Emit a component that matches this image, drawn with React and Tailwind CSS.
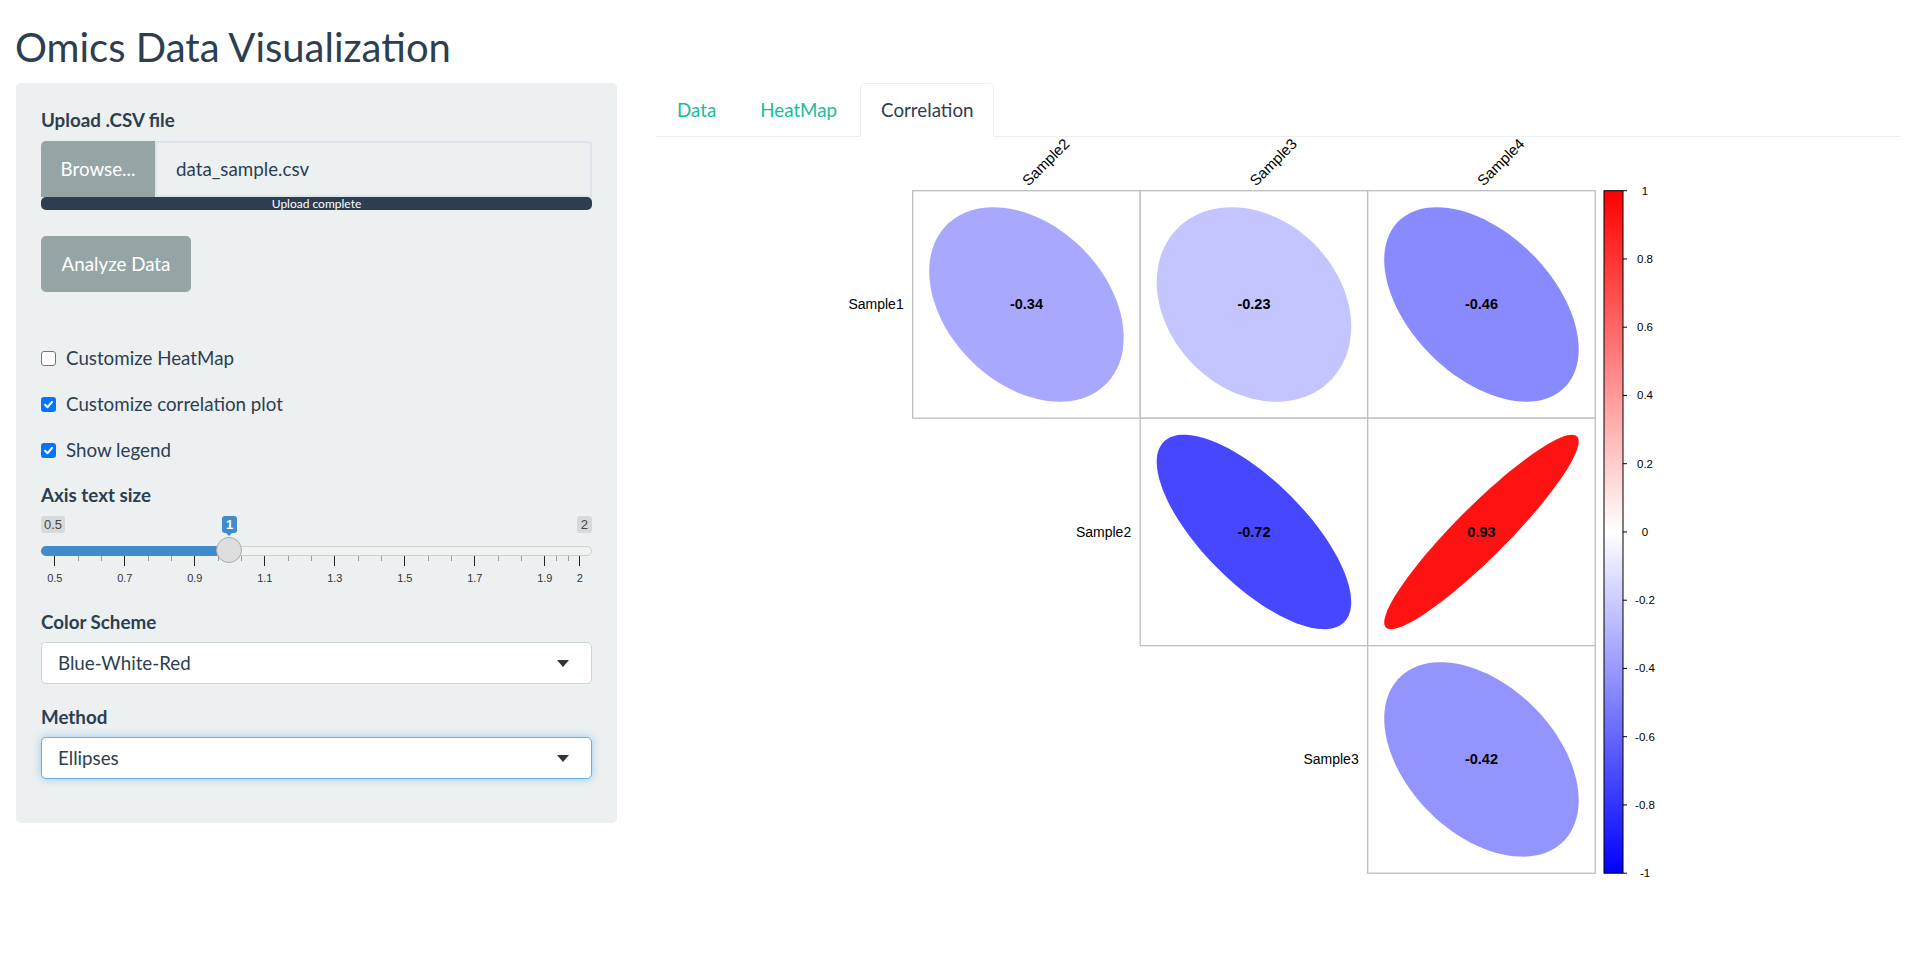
import React from 'react';

const cells = [
  { row: 0, col: 0, r: -0.34 },
  { row: 0, col: 1, r: -0.23 },
  { row: 0, col: 2, r: -0.46 },
  { row: 1, col: 1, r: -0.72 },
  { row: 1, col: 2, r: 0.93 },
  { row: 2, col: 2, r: -0.42 },
];

const colNames = ['Sample2', 'Sample3', 'Sample4'];
const rowNames = ['Sample1', 'Sample2', 'Sample3'];

// plot geometry (svg units = page px, offset from the tab content origin)
const GX = 256.7;
const GY = 53.7;
const CELL = 227.5;
const LEG_X = 948;
const LEG_W = 19;
const LEG_H = CELL * 3;

function fillFor(r) {
  if (r < 0) {
    const c = Math.round(255 * (1 + r));
    return `rgb(${c},${c},255)`;
  }
  const c = Math.round(255 * (1 - r));
  return `rgb(255,${c},${c})`;
}

function ellipsePoints(cx, cy, size, rho) {
  const a = Math.acos(rho);
  const pts = [];
  for (let i = 0; i < 99; i++) {
    const k = (i / 98) * 2 * Math.PI;
    const x = Math.cos(k + a / 2) / 2;
    const y = Math.cos(k - a / 2) / 2;
    pts.push(`${(cx + x * size).toFixed(1)},${(cy - y * size).toFixed(1)}`);
  }
  return pts.join(' ');
}

function CorrPlot() {
  const legendTicks = [1, 0.8, 0.6, 0.4, 0.2, 0, -0.2, -0.4, -0.6, -0.8, -1];
  return (
    <svg width="1245" height="760" className="block" fontFamily="'Liberation Sans', Arial, sans-serif">
      <defs>
        <linearGradient id="bwr" x1="0" y1="0" x2="0" y2="1">
          <stop offset="0" stopColor="#ff0000" />
          <stop offset="0.5" stopColor="#ffffff" />
          <stop offset="1" stopColor="#0000ff" />
        </linearGradient>
      </defs>

      {cells.map((c) => {
        const x = GX + c.col * CELL;
        const y = GY + c.row * CELL;
        return (
          <g key={`${c.row}-${c.col}`}>
            <rect x={x} y={y} width={CELL} height={CELL} fill="white" stroke="#bebebe" strokeWidth="1.3" />
            <polygon points={ellipsePoints(x + CELL / 2, y + CELL / 2, 194.5, c.r)} fill={fillFor(c.r)} />
            <text x={x + CELL / 2} y={y + CELL / 2 + 5} textAnchor="middle" fontSize="14.5" fontWeight="bold" fill="#000">
              {c.r.toFixed(2)}
            </text>
          </g>
        );
      })}

      {colNames.map((n, i) => {
        const x = GX + i * CELL + CELL / 2 + 2;
        const y = GY - 4;
        return (
          <text key={n} x={x} y={y} fontSize="15" fill="#000" transform={`rotate(-45 ${x} ${y})`}>
            {n}
          </text>
        );
      })}

      {rowNames.map((n, i) => (
        <text key={n} x={GX + i * CELL - 9} y={GY + i * CELL + CELL / 2 + 5} fontSize="14" textAnchor="end" fill="#000">
          {n}
        </text>
      ))}

      <rect x={LEG_X} y={GY} width={LEG_W} height={LEG_H} fill="url(#bwr)" stroke="#000" strokeWidth="1" />
      {legendTicks.map((v) => {
        const y = GY + ((1 - v) / 2) * LEG_H;
        return (
          <g key={v}>
            <line x1={LEG_X + LEG_W} x2={LEG_X + LEG_W + 4} y1={y} y2={y} stroke="#000" strokeWidth="1" />
            <text x={989} y={y + 4} fontSize="11.5" textAnchor="middle" fill="#000">
              {v}
            </text>
          </g>
        );
      })}
    </svg>
  );
}

function CheckBox({ checked, label }) {
  return (
    <div className="flex h-[24px] items-center">
      {checked ? (
        <span className="flex h-[15px] w-[15px] items-center justify-center rounded-[3px] bg-[#0075ff]">
          <svg width="11" height="11" viewBox="0 0 12 12">
            <path d="M2.2 6.3 L4.9 9 L9.9 3.2" fill="none" stroke="white" strokeWidth="2.2" strokeLinecap="round" strokeLinejoin="round" />
          </svg>
        </span>
      ) : (
        <span className="h-[15px] w-[15px] rounded-[3px] border border-[#767676] bg-white" />
      )}
      <span className="ml-[10px] text-[18.75px] leading-[24px]">{label}</span>
    </div>
  );
}

function Select({ value, focused }) {
  return (
    <div
      className={`mt-[8px] flex h-[42px] items-center justify-between rounded-[5px] border bg-white pl-[16px] pr-[22px] text-[18.75px] ${
        focused ? 'border-[#66afe9] shadow-[0_0_8px_rgba(102,175,233,0.6)]' : 'border-[#cfd4d6]'
      }`}
    >
      <span>{value}</span>
      <svg width="12" height="7" viewBox="0 0 12 7">
        <path d="M0 0 L12 0 L6 7 Z" fill="#333" />
      </svg>
    </div>
  );
}

function AxisSlider() {
  const px = (v) => 13.3 + (v - 0.5) * 350;
  const majors = [0.5, 0.7, 0.9, 1.1, 1.3, 1.5, 1.7, 1.9, 2];
  const minors = [];
  for (let i = 0; i < majors.length - 1; i++) {
    const a = px(majors[i]);
    const b = px(majors[i + 1]);
    minors.push(a + (b - a) / 3, a + (2 * (b - a)) / 3);
  }
  return (
    <div className="relative mt-[9px] h-[94px] font-['Liberation_Sans',Arial,sans-serif]">
      <span className="absolute left-0 top-0 h-[17px] rounded-[3px] bg-[#d6dadb] px-[3px] text-[13px] leading-[17px] text-[#444]">
        0.5
      </span>
      <span className="absolute right-0 top-0 h-[17px] rounded-[3px] bg-[#d6dadb] px-[4px] text-[13px] leading-[17px] text-[#444]">
        2
      </span>
      <span className="absolute left-[181px] top-0 h-[17px] w-[15px] rounded-[3px] bg-[#428bca] text-center text-[13px] font-bold leading-[17px] text-white">
        1
        <span className="absolute left-[4px] top-[17px] h-0 w-0 border-x-[3px] border-t-[3px] border-x-transparent border-t-[#428bca]" />
      </span>
      <div className="absolute left-0 right-0 top-[30px] h-[10px] rounded-full border border-[#cfcfcf] bg-[#f1f1f1]" />
      <div className="absolute left-0 top-[30px] h-[10px] w-[190px] rounded-l-full bg-[#428bca]" />
      <div className="absolute left-[175px] top-[21px] h-[26px] w-[26px] rounded-full border border-[#ababab] bg-[#dedede]" />
      {minors.map((x) => (
        <span key={x} className="absolute top-[40px] h-[5px] w-px bg-[#999]" style={{ left: x }} />
      ))}
      {majors.map((v) => (
        <React.Fragment key={v}>
          <span className="absolute top-[40px] h-[10px] w-px bg-[#222]" style={{ left: px(v) }} />
          <span
            className="absolute top-[55px] w-[30px] -translate-x-1/2 text-center text-[11px] leading-[14px] text-[#333]"
            style={{ left: px(v) + 0.5 }}
          >
            {v}
          </span>
        </React.Fragment>
      ))}
    </div>
  );
}

export default function App() {
  return (
    <div className="min-h-screen bg-white font-['Lato',sans-serif] text-[#2c3e50]">
      <h2 className="pl-[15px] pt-[25px] text-[40px] font-normal leading-[45px]">Omics Data Visualization</h2>

      <div className="mt-[13px] flex items-start">
        {/* Sidebar */}
        <div className="ml-[16px] w-[601px] rounded-[5px] bg-[#ecf0f1] px-[25px] pb-[44px] pt-[25px]">
          <div className="text-[18.75px] font-bold leading-[24px]">Upload .CSV file</div>
          <div className="mt-[9px] flex h-[56px]">
            <div className="flex w-[114px] items-center justify-center rounded-tl-[5px] bg-[#95a5a6] text-[18.75px] text-white">
              Browse...
            </div>
            <div className="flex flex-1 items-center rounded-tr-[4px] border-2 border-[#dce4ec] bg-[#ecf0f1] pl-[19px] text-[18.75px]">
              data_sample.csv
            </div>
          </div>
          <div className="h-[13px] rounded-[5px] bg-[#2c3e50] text-center text-[12px] leading-[13px] text-white">
            Upload complete
          </div>

          <button className="mt-[26px] block h-[56px] w-[150px] rounded-[5px] bg-[#95a5a6] text-[18.75px] text-white">
            Analyze Data
          </button>

          <div className="mt-[54px] flex flex-col gap-[22px]">
            <CheckBox checked={false} label="Customize HeatMap" />
            <CheckBox checked label="Customize correlation plot" />
            <CheckBox checked label="Show legend" />
          </div>

          <div className="mt-[21px] text-[18.75px] font-bold leading-[24px]">Axis text size</div>
          <AxisSlider />

          <div className="text-[18.75px] font-bold leading-[24px]">Color Scheme</div>
          <Select value="Blue-White-Red" />

          <div className="mt-[21px] text-[18.75px] font-bold leading-[24px]">Method</div>
          <Select value="Ellipses" focused />
        </div>

        {/* Main */}
        <div className="ml-[39px] mr-[16px] flex-1">
          <div className="flex border-b border-[#ecf0f1]">
            <div className="mr-[2px] border border-transparent px-[20px] py-[12px] text-[18.75px] leading-[27px] text-[#18bc9c]">Data</div>
            <div className="mr-[2px] border border-transparent px-[20px] py-[12px] text-[18.75px] leading-[27px] text-[#18bc9c]">HeatMap</div>
            <div className="-mb-px rounded-t-[5px] border border-[#ecf0f1] border-b-white bg-white px-[20px] py-[12px] text-[18.75px] leading-[27px] text-[#2c3e50]">
              Correlation
            </div>
          </div>
          <CorrPlot />
        </div>
      </div>
    </div>
  );
}
